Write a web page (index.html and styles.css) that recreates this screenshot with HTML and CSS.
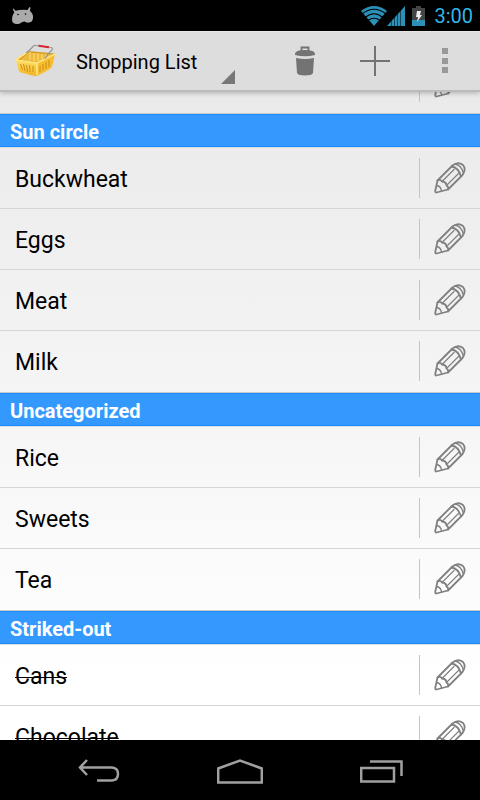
FILE: index.html
```html
<!DOCTYPE html>
<html lang="en">
<head>
<meta charset="utf-8">
<meta name="viewport" content="width=device-width, initial-scale=1">
<title>Shopping List</title>
<link rel="stylesheet" href="styles.css">
</head>
<body>
<svg class="defs" aria-hidden="true">
  <symbol id="pencil" viewBox="0 0 34 34">
    <g fill="none" stroke="#808080" stroke-width="1.8" stroke-linejoin="round" stroke-linecap="round">
      <path d="M3.500 31.500Q2 31.500 2.300 29.500L4.500 19.500 19.500 4.500Q25 0 30 4 33.500 8 29.500 14L15 28.500Z"/>
      <path d="M4.500 19.500Q7.500 18 9 20.500 13.500 21 13.500 24.500 16 26 15 28.500"/>
      <path d="M18.500 5.500Q25.500 6.500 28 15.500"/>
      <path d="M22 3Q28.500 4 30.500 12.500" stroke-width="1.300"/>
      <path d="M9 20.500 21 8.500M13.500 24.500 25.500 12.500" stroke-width="1.200"/>
      <path d="M4 24.500Q8 25.500 8.500 30" stroke-width="1.300"/>
    </g>
  </symbol>
</svg>
<div class="screen">
  <div class="status">
    <svg class="droid" viewBox="0 0 24 20" aria-hidden="true"><path fill="#aaa" d="M2.500 2.500 4.500 4.800Q11 3 16.500 4L18.500 1 19.500 1.500 19 5Q22.500 8 22 12 21.500 16.500 17.500 16.500 15.500 17 13.500 15.500 11 15.500 9 17.500 3 19 1.500 16 0 11 3.300 6.500L1.800 3Z"/><circle cx="7" cy="8.500" r=".8"/><circle cx="14.500" cy="8" r=".8"/></svg>
    <div class="signals">
      <svg width="26" height="20" viewBox="0 0 26 20" aria-hidden="true"><path fill="#2b8fb8" d="M0 5Q13-5 26 5L13 20Z"/><g fill="none" stroke="#000" stroke-width="1.200"><path d="M1 8Q13-1.500 25 8M4 11.500Q13 4 22 11.500M7 14.500Q13 10 19 14.500"/></g></svg>
      <svg width="18" height="20" viewBox="0 0 18 20" aria-hidden="true"><path fill="#2b8fb8" d="M0 20 18 0V20Z"/><path stroke="#000" stroke-opacity=".5" d="M4.500 12V20M7.500 9V20M10.500 6V20M13.500 3V20"/></svg>
      <svg class="battery" width="13" height="20" viewBox="0 0 13 20" aria-hidden="true"><path fill="#444" d="M0 2H4V0H9V2H13V20H0Z"/><path fill="#2b8fb8" d="M0 14H13V20H0Z"/><path fill="#eee" d="M5 5H9L8 9H10L5 16 6 11H4Z"/></svg>
      <time class="clock">3:00</time>
    </div>
  </div>

  <header class="bar">
    <svg class="basket" viewBox="0 0 42 34" aria-hidden="true">
      <defs><linearGradient id="gold" x1="0" y1="0" x2="0" y2="1"><stop offset="0" stop-color="#ffdf62"/><stop offset="1" stop-color="#f3b423"/></linearGradient></defs>
      <path fill="#d59a22" d="M1 16 13 7 40 9.500 22 19.500Z"/>
      <path fill="#ecba3c" d="M5 16 14 8.500 37 10.500 22 18Z"/>
      <path stroke="#ffe079" stroke-width="1" d="M15 8V16M19 9V17M23 9V17M27 10V15M31 10V14"/>
      <path fill="url(#gold)" d="M1 16 22 19V32Q20 32.500 6 28.500 4 28 3.500 26Z"/>
      <path fill="#f6bd31" d="M22 19 40 10 37 23Q36 25 22 32Z"/>
      <path stroke="#c98f17" stroke-width="1" fill="none" d="M5.500 20 7.500 26M8.500 20 10 27M11.500 21 12.500 28M14.500 21 15 28M18 22V28M25 22V28M28 20V26M31 18V25M34 16V23"/>
      <path fill="none" stroke="#ffe680" stroke-width="1.600" stroke-linejoin="round" d="M22 31V19L1 16 13 7.500M22 19 40 10"/>
      <path fill="none" stroke="#969696" stroke-width="1.200" d="M11 9Q14 7 18 2.500 19 1 21 1.500L36 3.500Q38.500 4 36.500 6.500 32 10 30 15"/>
      <path stroke="#d7262d" stroke-width="2" d="M23.500 1.800 34 3.300"/>
    </svg>
    <button class="spinner" type="button">Shopping List</button>
    <div class="actions">
      <button type="button" aria-label="Delete"><svg width="20" height="30" viewBox="0 0 20 30"><path fill="none" stroke="#737373" stroke-width="1.800" d="M6.500 5V1.500H13.500V5"/><path fill="#737373" d="M0 8Q0 4 10 4T20 8V9Q10 11.500 0 9ZM1 12Q10 14 19 12L18 27Q17 29.500 10 29.500T2 27Z"/></svg></button>
      <button type="button" aria-label="Add"><svg width="30" height="30" viewBox="0 0 30 30"><path stroke="#737373" stroke-width="2" d="M15 0V30M0 15H30"/></svg></button>
      <button type="button" aria-label="More options"><svg width="6" height="26" viewBox="0 0 6 26"><path fill="#999" d="M0 0H6V6H0ZM0 10H6V16H0ZM0 19H6V25H0Z"/></svg></button>
    </div>
  </header>

  <main class="list">
    <ul class="scrolled"><li><span>Water</span><button type="button" aria-label="Edit"><svg><use href="#pencil"/></svg></button></li></ul>
    <h2>Sun circle</h2>
    <ul>
      <li><span>Buckwheat</span><button type="button" aria-label="Edit"><svg><use href="#pencil"/></svg></button></li>
      <li><span>Eggs</span><button type="button" aria-label="Edit"><svg><use href="#pencil"/></svg></button></li>
      <li><span>Meat</span><button type="button" aria-label="Edit"><svg><use href="#pencil"/></svg></button></li>
      <li><span>Milk</span><button type="button" aria-label="Edit"><svg><use href="#pencil"/></svg></button></li>
    </ul>
    <h2>Uncategorized</h2>
    <ul>
      <li><span>Rice</span><button type="button" aria-label="Edit"><svg><use href="#pencil"/></svg></button></li>
      <li><span>Sweets</span><button type="button" aria-label="Edit"><svg><use href="#pencil"/></svg></button></li>
      <li><span>Tea</span><button type="button" aria-label="Edit"><svg><use href="#pencil"/></svg></button></li>
    </ul>
    <h2>Striked-out</h2>
    <ul>
      <li><s>Cans</s><button type="button" aria-label="Edit"><svg><use href="#pencil"/></svg></button></li>
      <li><s>Chocolate</s><button type="button" aria-label="Edit"><svg><use href="#pencil"/></svg></button></li>
    </ul>
  </main>

  <nav class="nav">
    <button type="button" aria-label="Back"><svg width="42" height="24" viewBox="0 0 42 24"><path d="M9 1 2 8.500 9 16M2 8.500H34Q40 9 40 15T34 21.500H19"/></svg></button>
    <button type="button" aria-label="Home"><svg width="46" height="25" viewBox="0 0 46 25"><path d="M1.200 23.500V9.500L23 1.500 44.800 9.500V23.500Z"/></svg></button>
    <button type="button" aria-label="Recent apps"><svg width="43" height="23" viewBox="0 0 43 23"><path d="M1.200 8H34V21.500H1.200ZM10 1.500H41.500V16"/></svg></button>
  </nav>
</div>
</body>
</html>
```
FILE: styles.css
```css
* { box-sizing: border-box; }

body {
  margin: 0;
  background: #000;
  color: #000;
  font-family: Roboto, sans-serif;
}

button {
  margin: 0;
  padding: 0;
  border: 0;
  background: none;
  color: inherit;
  font: inherit;
}

svg { display: block; }

.defs {
  position: absolute;
  width: 0;
  height: 0;
}

.screen {
  display: flex;
  flex-direction: column;
  height: 100vh;
}

.status {
  display: flex;
  flex: none;
  align-items: center;
  justify-content: space-between;
  height: 31px;
  padding: 0 7px 0 11px;
}

.droid {
  width: 24px;
  height: 20px;
}

.signals {
  display: flex;
  align-items: center;
}

.battery { margin: 0 9px 0 7px; }

.clock {
  color: #33b5e5;
  font-size: 20px;
}

.bar {
  position: relative;
  display: flex;
  flex: none;
  align-items: center;
  height: 61px;
  padding-left: 15px;
  border-top: 1px solid #e6e6e6;
  border-bottom: 2px solid #bbb;
  background: #ddd;
  box-shadow: 0 1px 5px rgba(0, 0, 0, 0.25);
}

.basket {
  width: 42px;
  height: 34px;
}

.spinner {
  position: relative;
  width: 178px;
  height: 46px;
  padding: 2px 0 0 19px;
  font-size: 20px;
  text-align: left;
}

.spinner::after {
  position: absolute;
  right: 0;
  bottom: 0;
  border: 7px solid #777;
  border-top-color: transparent;
  border-left-color: transparent;
  content: "";
}

.actions {
  display: flex;
  margin-left: auto;
}

.actions button {
  display: grid;
  place-items: center;
  width: 70px;
  height: 56px;
}

.list {
  flex: 1;
  min-height: 0;
  overflow: hidden;
  background: linear-gradient(#eaeaea, #fff 90%);
}

.list ul {
  margin: 0;
  padding: 0;
  list-style: none;
}

.list .scrolled { margin-top: -40px; }

.list h2 {
  height: 35px;
  margin: 0;
  padding-left: 10px;
  border-top: 1px solid #ccc;
  border-bottom: 1px solid #ddd;
  background: #39f;
  box-shadow: inset 0 1px #1a8cff, inset 0 -1px #1a8cff;
  color: #fff;
  font-size: 20px;
  font-weight: 700;
  line-height: 36px;
}

.list li {
  display: flex;
  align-items: center;
  justify-content: space-between;
  height: 61px;
  padding-left: 15px;
  border-bottom: 1px solid #d6d6d6;
  font-size: 23px;
}

.list li:last-child { border-bottom-color: transparent; }

.list span,
.list s { padding-top: 3px; }

.list li button {
  display: grid;
  place-items: center;
  width: 61px;
  height: 40px;
  border-left: 1px solid #c4c4c4;
}

.list li svg {
  width: 34px;
  height: 34px;
}

.list s { text-decoration-thickness: 1px; }

.nav {
  display: flex;
  flex: none;
  justify-content: center;
  height: 60px;
  padding-top: 2px;
}

.nav button {
  display: grid;
  place-items: center;
  width: 141px;
}

.nav path {
  fill: none;
  stroke: #a0a0a0;
  stroke-width: 2.5px;
}
```
